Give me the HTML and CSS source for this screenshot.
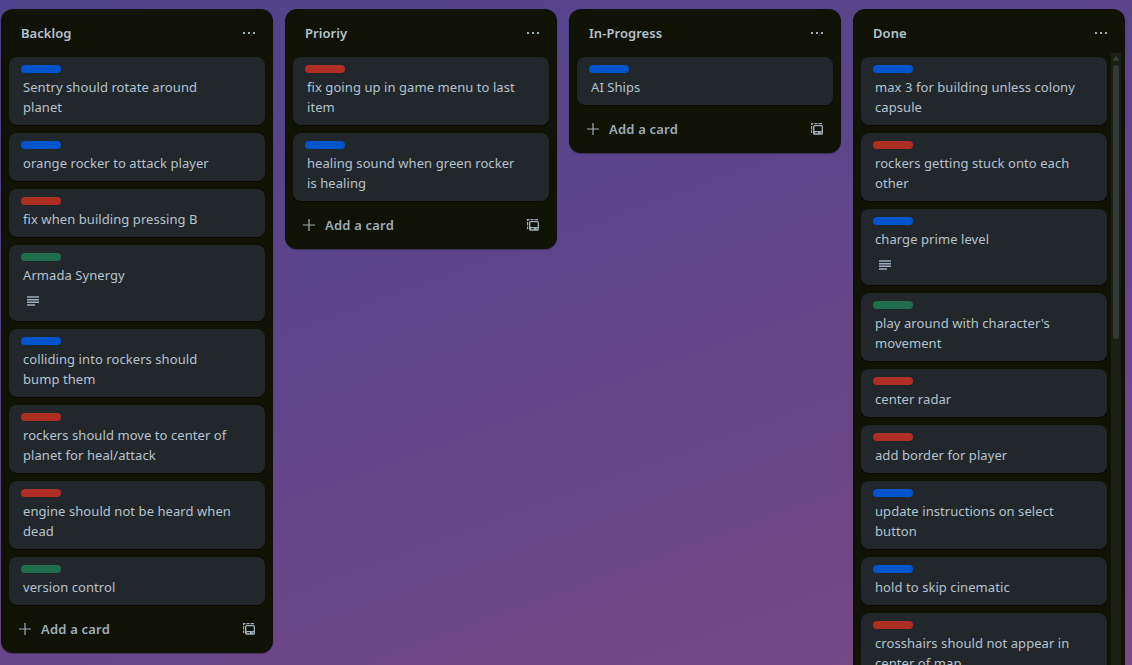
FILE: index.html
```
<!DOCTYPE html>
<html lang="en">
<head>
<meta charset="utf-8">
<title>Board</title>
<link rel="stylesheet" href="styles.css">
</head>
<body>
<svg class="defs" aria-hidden="true">
  <symbol id="dots" viewBox="0 0 16 16"><path d="M2 7h2v2H2zM7 7h2v2H7zM12 7h2v2h-2z"/></symbol>
  <symbol id="plus" viewBox="0 0 16 16"><path d="M7.400 2h1.200v5.400H14v1.200H8.600V14H7.400V8.600H2V7.400h5.400z"/></symbol>
  <symbol id="lines" viewBox="0 0 16 16"><path d="M2 3.300h12v1.500H2zM2 5.900h12v1.500H2zM2 8.600h12v1.500H2zM2 11.200h8v1.500H2z"/></symbol>
  <symbol id="template" viewBox="0 0 16 16"><path d="M2 2h2.500v1.200H3.200V4H2zM5.500 2h3v1.200h-3zM9.500 2H13v1.200H9.500zM2 5h1.200v3.500H2zM2 9.500h1.200V12H2z"/><path fill-rule="evenodd" d="M5.500 4h7A1.500 1.500 0 0 1 14 5.500v6.700a1.500 1.500 0 0 1-1.500 1.500h-7A1.500 1.500 0 0 1 4 12.200V5.500A1.500 1.500 0 0 1 5.500 4zM5.400 5.300V10h7.300V5.300zM6 11.300v1h3v-1zM11.700 11.300v1h1v-1z"/></symbol>
</svg>
<main class="board">
  <section class="list">
    <header class="list-header"><h2>Backlog</h2><svg class="icon"><use href="#dots"/></svg></header>
    <div class="cards">
      <article class="card"><span class="label blue"></span><p>Sentry should rotate around<br>planet</p></article>
      <article class="card"><span class="label blue"></span><p>orange rocker to attack player</p></article>
      <article class="card"><span class="label red"></span><p>fix when building pressing B</p></article>
      <article class="card"><span class="label green"></span><p>Armada Synergy</p><div class="badges"><svg class="icon"><use href="#lines"/></svg></div></article>
      <article class="card"><span class="label blue"></span><p>colliding into rockers should<br>bump them</p></article>
      <article class="card"><span class="label red"></span><p>rockers should move to center of<br>planet for heal/attack</p></article>
      <article class="card"><span class="label red"></span><p>engine should not be heard when<br>dead</p></article>
      <article class="card"><span class="label green"></span><p>version control</p></article>
    </div>
    <footer class="list-footer"><svg class="icon"><use href="#plus"/></svg><span>Add a card</span><svg class="icon"><use href="#template"/></svg></footer>
  </section>
  <section class="list">
    <header class="list-header"><h2>Prioriy</h2><svg class="icon"><use href="#dots"/></svg></header>
    <div class="cards">
      <article class="card"><span class="label red"></span><p>fix going up in game menu to last<br>item</p></article>
      <article class="card"><span class="label blue"></span><p>healing sound when green rocker<br>is healing</p></article>
    </div>
    <footer class="list-footer"><svg class="icon"><use href="#plus"/></svg><span>Add a card</span><svg class="icon"><use href="#template"/></svg></footer>
  </section>
  <section class="list">
    <header class="list-header"><h2>In-Progress</h2><svg class="icon"><use href="#dots"/></svg></header>
    <div class="cards">
      <article class="card"><span class="label blue"></span><p>AI Ships</p></article>
    </div>
    <footer class="list-footer"><svg class="icon"><use href="#plus"/></svg><span>Add a card</span><svg class="icon"><use href="#template"/></svg></footer>
  </section>
  <section class="list tall">
    <header class="list-header"><h2>Done</h2><svg class="icon"><use href="#dots"/></svg></header>
    <div class="scroll-area">
      <div class="cards">
        <article class="card"><span class="label blue"></span><p>max 3 for building unless colony<br>capsule</p></article>
        <article class="card"><span class="label red"></span><p>rockers getting stuck onto each<br>other</p></article>
        <article class="card"><span class="label blue"></span><p>charge prime level</p><div class="badges"><svg class="icon"><use href="#lines"/></svg></div></article>
        <article class="card"><span class="label green"></span><p>play around with character's<br>movement</p></article>
        <article class="card"><span class="label red"></span><p>center radar</p></article>
        <article class="card"><span class="label red"></span><p>add border for player</p></article>
        <article class="card"><span class="label blue"></span><p>update instructions on select<br>button</p></article>
        <article class="card"><span class="label blue"></span><p>hold to skip cinematic</p></article>
        <article class="card"><span class="label red"></span><p>crosshairs should not appear in<br>center of map</p></article>
      </div>
      <div class="scrollbar"><svg class="arrow" viewBox="0 0 10 12"><path d="M5 3l3.300 4.500H1.700z"/></svg><div class="thumb"></div></div>
    </div>
  </section>
</main>
</body>
</html>
```
FILE: styles.css
```
* { box-sizing: border-box; }
body {
  margin: 0;
  height: 665px;
  overflow: hidden;
  font: 13px/20px "Noto Sans", "Open Sans", sans-serif;
  color: #b6c2cf;
  background: linear-gradient(160deg, #4e428c 0%, #5e458a 45%, #7a4985 100%);
}
.defs { display: none; }
.board {
  display: flex;
  align-items: flex-start;
  gap: 12px;
  height: 665px;
  padding: 9px 0 0 1px;
}
.list {
  flex: 0 0 272px;
  border-radius: 12px;
  background: #101204;
  box-shadow: 0 1px 1px #09102066;
}
.tall {
  height: 656px;
  border-radius: 12px 12px 0 0;
  overflow: hidden;
}
.icon { flex: none; width: 16px; height: 16px; fill: #9fadbc; }
.list-header {
  display: flex;
  align-items: center;
  justify-content: space-between;
  height: 48px;
  padding: 0 16px 0 20px;
}
h2 { margin: 0; font-size: 13px; font-weight: 600; line-height: 20px; letter-spacing: 0.05px; }
.cards {
  display: flex;
  flex: 1;
  flex-direction: column;
  gap: 8px;
  padding: 0 8px;
}
.card {
  padding: 8px 8px 8px 12px;
  border-radius: 8px;
  background: #22272b;
  box-shadow: 0 1px 1px #03040480;
}
.label { display: block; width: 40px; height: 8px; margin-bottom: 4px; border-radius: 4px; }
.blue { background: #0055cc; }
.red { background: #ae2e24; }
.green { background: #216e4e; }
p { margin: 0; padding-left: 2px; white-space: nowrap; letter-spacing: 0.07px; }
.badges { display: flex; align-items: center; height: 28px; padding: 0 0 0 4px; }
.badges .icon { margin-top: 4px; }
.list-footer {
  display: flex;
  align-items: center;
  gap: 8px;
  height: 48px;
  padding: 0 16px;
  color: #9fadbc;
  font-weight: 600;
  letter-spacing: 0.2px;
}
.list-footer span { flex: 1; }
.scroll-area { display: flex; }
.scroll-area .cards { padding-right: 4px; }
.scrollbar {
  width: 10px;
  height: 640px;
  margin: -4px 4px 0 0;
  background: #1c1f16;
}
.arrow { display: block; width: 10px; height: 12px; fill: #3a403a; }
.thumb { width: 6px; height: 274px; margin: 0 2px; border-radius: 3px; background: #323a38; }
```
